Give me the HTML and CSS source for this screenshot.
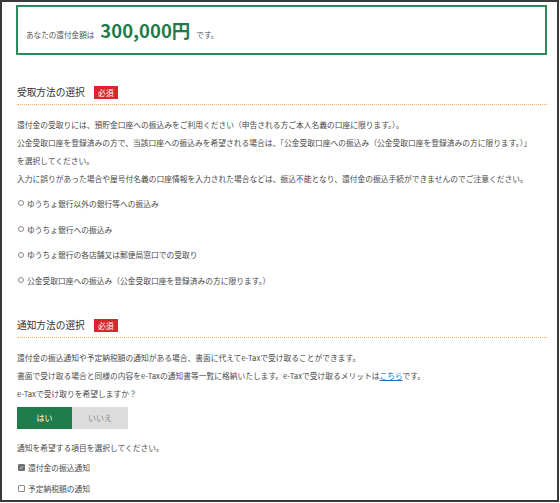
FILE: index.html
```html
<!DOCTYPE html>
<html lang="ja">
<head>
<meta charset="utf-8">
<title>還付金</title>
<link rel="stylesheet" href="styles.css">
</head>
<body>
<div class="frame">
  <div class="amount-box">
    <div class="amount-line">
      <span class="amount-label">あなたの還付金額は</span><span class="amount-value">300,000円</span><span class="amount-suffix">です。</span>
    </div>
  </div>

  <section class="section sec-receive">
    <h2 class="sec-title">受取方法の選択<span class="badge">必須</span></h2>
    <p class="desc">還付金の受取りには、預貯金口座への振込みをご利用ください（申告される方ご本人名義の口座に限ります。）。<br>公金受取口座を登録済みの方で、当該口座への振込みを希望される場合は、「公金受取口座への振込み（公金受取口座を登録済みの方に限ります。）」<br>を選択してください。<br>入力に誤りがあった場合や屋号付名義の口座情報を入力された場合などは、振込不能となり、還付金の振込手続ができませんのでご注意ください。</p>
    <ul class="radios">
      <li class="radio-row"><span class="radio"></span>ゆうちょ銀行以外の銀行等への振込み</li>
      <li class="radio-row"><span class="radio"></span>ゆうちょ銀行への振込み</li>
      <li class="radio-row"><span class="radio"></span>ゆうちょ銀行の各店舗又は郵便局窓口での受取り</li>
      <li class="radio-row"><span class="radio"></span>公金受取口座への振込み（公金受取口座を登録済みの方に限ります。）</li>
    </ul>
  </section>

  <section class="section sec-notify">
    <h2 class="sec-title">通知方法の選択<span class="badge">必須</span></h2>
    <p class="desc">還付金の振込通知や予定納税額の通知がある場合、書面に代えてe-Taxで受け取ることができます。<br>書面で受け取る場合と同様の内容をe-Taxの通知書等一覧に格納いたします。e-Taxで受け取るメリットは<a class="link" href="#">こちら</a>です。<br>e-Taxで受け取りを希望しますか？</p>
    <div class="toggle">
      <span class="toggle-btn on">はい</span><span class="toggle-btn off">いいえ</span>
    </div>
    <p class="note">通知を希望する項目を選択してください。</p>
    <ul class="checks">
      <li class="check-row"><span class="checkbox checked"><svg viewBox="0 0 8 8" width="8" height="8"><path d="M1.6 4.1 L3.3 5.7 L6.4 2.3" fill="none" stroke="#fff" stroke-width="1.2"/></svg></span>還付金の振込通知</li>
      <li class="check-row"><span class="checkbox"></span>予定納税額の通知</li>
    </ul>
  </section>
</div>
</body>
</html>
```

FILE: styles.css
```css
* { box-sizing: border-box; }
html, body { margin: 0; padding: 0; background: #fff; }
body {
  font-family: "Noto Sans CJK JP", "Noto Sans", sans-serif;
  color: #4a4a4a;
}
.frame {
  width: 559px;
  height: 502px;
  border: 2px solid #3a3a3a;
  overflow: hidden;
  background: #fff;
}
.amount-box {
  margin: 3px 0 0 14px;
  width: 531px;
  height: 50px;
  border: 2px solid #2e8a59;
  display: flex;
  align-items: center;
  padding-left: 8px;
}
.amount-line { line-height: 1; white-space: nowrap; }
.amount-label { font-size: 7.6px; color: #555; }
.amount-value {
  font-size: 18.5px;
  font-weight: 700;
  color: #1f7a4a;
  margin: 0 6px 0 6px;
}
.amount-suffix { font-size: 7.6px; color: #555; }

.section { padding-left: 15px; width: 545px; }
.sec-title {
  margin: 0;
  height: 21px;
  padding-bottom: 4px;
  border-bottom: 1px dotted #f0b24c;
  font-size: 9.7px;
  font-weight: 400;
  line-height: 16px;
  color: #333;
  display: flex;
  align-items: center;
}
.sec-receive .sec-title { margin-top: 29px; }
.sec-notify .sec-title { margin-top: 24px; }
.badge {
  margin-left: 9px;
  width: 24px;
  height: 13px;
  line-height: 13px;
  text-align: center;
  background: #d8262c;
  color: #fff;
  font-size: 7.8px;
}
.desc {
  margin: 11px 0 0 0;
  font-size: 7.75px;
  line-height: 18px;
  white-space: nowrap;
}
.link { color: #1a6dbf; text-decoration: underline; }

.radios { list-style: none; margin: 2.5px 0 0 0; padding: 0; }
.radio-row {
  height: 25.7px;
  display: flex;
  align-items: center;
  font-size: 7.75px;
}
.radio {
  width: 6px;
  height: 6px;
  border: 1px solid #8a8a8a;
  border-radius: 50%;
  margin: 0 3px 0 1px;
  flex: none;
}

.toggle { display: flex; margin-top: 4px; }
.toggle-btn {
  height: 22px;
  line-height: 22px;
  text-align: center;
  font-size: 8px;
}
.toggle-btn.on { width: 55px; background: #1f7d4b; color: #fff; }
.toggle-btn.off { width: 56px; background: #dcdcdc; color: #888; }

.note {
  margin: 10px 0 0 0;
  font-size: 7.75px;
  line-height: 18px;
}
.checks { list-style: none; margin: 0; padding: 0; }
.check-row {
  height: 21px;
  display: flex;
  align-items: center;
  font-size: 7.75px;
}
.checkbox {
  width: 7px;
  height: 7px;
  border: 1px solid #8a8a8a;
  border-radius: 1px;
  margin: 0 3px 0 1px;
  flex: none;
  display: flex;
  align-items: center;
  justify-content: center;
  background: #fff;
}
.checkbox.checked { background: #6f6f6f; border-color: #6f6f6f; }
.checkbox svg { width: 7px; height: 7px; display: block; }
```
